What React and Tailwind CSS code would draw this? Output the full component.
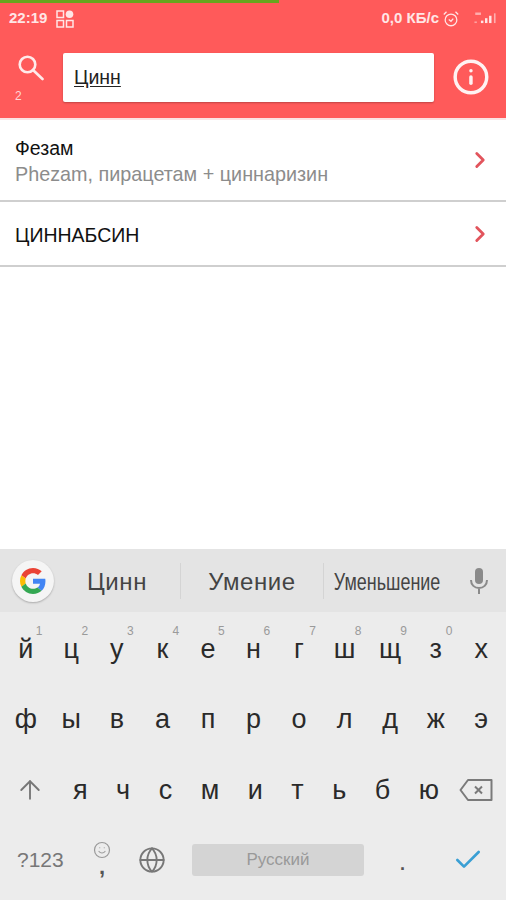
import { Info, ChevronRight, ArrowUp, Globe, Check, Smile } from 'lucide-react';

const topRow = [
  ['й', '1'], ['ц', '2'], ['у', '3'], ['к', '4'], ['е', '5'], ['н', '6'],
  ['г', '7'], ['ш', '8'], ['щ', '9'], ['з', '0'], ['х', ''],
];
const midRow = ['ф', 'ы', 'в', 'а', 'п', 'р', 'о', 'л', 'д', 'ж', 'э'];
const lowRow = ['я', 'ч', 'с', 'м', 'и', 'т', 'ь', 'б', 'ю'];

const GoogleLogo = () => (
  <svg viewBox="0 0 48 48" className="w-[26px] h-[26px]">
    <path fill="#EA4335" d="M24 9.5c3.5 0 6.7 1.2 9.2 3.6l6.9-6.9C35.9 2.4 30.5 0 24 0 14.6 0 6.5 5.4 2.6 13.2l8 6.2C12.5 13.7 17.800 9.500 24 9.500z" />
    <path fill="#4285F4" d="M47 24.500c0-1.600-.1-3.100-.4-4.500H24v9h12.900c-.6 3-2.200 5.500-4.700 7.200l7.700 6C44.400 38 47 31.800 47 24.500z" />
    <path fill="#FBBC05" d="M10.600 28.600c-.5-1.400-.7-3-.7-4.600s.3-3.200.7-4.600l-8-6.200C.9 16.500 0 20.100 0 24s.9 7.500 2.600 10.800l8-6.200z" />
    <path fill="#34A853" d="M24 48c6.500 0 11.900-2.100 15.900-5.800l-7.700-6c-2.200 1.500-5 2.300-8.200 2.300-6.200 0-11.500-4.200-13.400-9.900l-8 6.200C6.500 42.600 14.600 48 24 48z" />
  </svg>
);

const ResultRow = ({ title, subtitle, className }) => (
  <div className={`flex items-center justify-between border-b-2 border-[#cfcfcf] pl-[15px] pr-[13px] ${className}`}>
    <div className={subtitle ? 'pt-[3px]' : 'pt-[4px]'}>
      <div className="text-[19.5px] leading-[25px] text-[#111]">{title}</div>
      {subtitle && <div className="text-[19.8px] leading-[27px] text-[#8c8c8c]">{subtitle}</div>}
    </div>
    <ChevronRight className={`w-[26px] h-[26px] text-[#e2545c] ${subtitle ? '' : 'mt-[1px]'}`} strokeWidth={2.6} />
  </div>
);

export default function App() {
  return (
    <div className="w-[506px] h-[900px] flex flex-col bg-white overflow-hidden font-['Liberation_Sans',sans-serif]">
      {/* Header */}
      <div className="h-[120px] bg-[#ff5a5a] relative shrink-0 border-b-2 border-[#fbe4e4]">
        <div className="absolute top-0 left-0 w-[279px] h-[3px] bg-[#66a61e]" />
        <div className="h-[37px] pl-[9px] pr-[8px] flex items-center justify-between text-[#ffe6e6] text-[15px] font-bold">
          <div className="flex items-center gap-[9px]">
            <span>22:19</span>
            <svg viewBox="0 0 18 18" className="w-[18px] h-[18px]" fill="none" stroke="currentColor" strokeWidth="1.5">
              <rect x="1" y="1" width="6.500" height="6.500" />
              <circle cx="13.500" cy="4.200" r="3.800" fill="currentColor" stroke="none" />
              <rect x="1" y="10.500" width="6.500" height="6.500" />
              <rect x="10.500" y="10.500" width="6.500" height="6.500" />
            </svg>
          </div>
          <div className="flex items-center">
            <span>0,0 КБ/с</span>
            <svg viewBox="0 0 20 20" className="ml-[3px] w-[18px] h-[18px]" fill="none" stroke="currentColor" strokeWidth="1.400">
              <circle cx="10" cy="11" r="6.500" />
              <path d="M7.500 10.500l2.500 2 2.500-3M2 5l3-3M18 5l-3-3" />
            </svg>
            <svg viewBox="0 0 32 18" className="ml-[12px] w-[26px] h-[18px]" fill="currentColor">
              <rect x="3" y="12" width="3" height="2" opacity="0.500" />
              <rect x="11" y="11" width="3" height="3" />
              <rect x="16" y="8" width="3" height="6" />
              <rect x="21" y="5" width="3" height="9" />
              <rect x="27" y="2" width="2" height="12" opacity="0.600" />
              <rect x="4" y="1" width="7" height="3" opacity="0.600" />
            </svg>
          </div>
        </div>
        <div className="flex items-start pl-[17px] pr-[16px] pt-[16px]">
          <div className="w-[46px] shrink-0 relative h-[49px]">
            <svg viewBox="0 0 26 26" className="absolute left-[1px] top-[2px] w-[26px] h-[26px] text-[#ffeaea]" fill="none" stroke="currentColor" strokeWidth="2.6" strokeLinecap="round">
              <circle cx="9.500" cy="9.500" r="7.800" />
              <path d="M15 15l9.500 9" />
            </svg>
            <span className="absolute left-[-2px] top-[36px] text-[12px] leading-[14px] text-[#ffd5d5]">2</span>
          </div>
          <div className="w-[372px] h-[49px] bg-white rounded-[2px] shadow-[0_1px_2px_rgba(0,0,0,0.25)] flex items-center pl-[11px] text-[19.5px] text-[#222] underline underline-offset-2">
            Цинн
          </div>
          <Info className="ml-[18px] w-[38px] h-[38px] mt-[5px] text-[#fff2f2]" strokeWidth={2.2} />
        </div>
      </div>

      {/* Results */}
      <div className="flex-1">
        <ResultRow className="h-[82px]" title="Фезам" subtitle="Phezam, пирацетам + циннаризин" />
        <ResultRow className="h-[65px]" title="ЦИННАБСИН" />
      </div>

      {/* Keyboard */}
      <div className="h-[351px] shrink-0 bg-[#ececec] flex flex-col text-[#2a2a2a]">
        <div className="h-[63px] bg-[#e4e4e4] flex items-center text-[#444]">
          <div className="ml-[12px] w-[42px] h-[42px] rounded-full bg-[#f5f5f5] shadow-[0_1px_2px_rgba(0,0,0,0.25)] flex items-center justify-center shrink-0">
            <GoogleLogo />
          </div>
          <div className="w-[126px] text-center text-[24px] tracking-[0.6px] pt-[3px]">Цинн</div>
          <div className="w-px h-[36px] bg-[#d4d4d4]" />
          <div className="w-[142px] text-center text-[24px] tracking-[0.6px] pt-[3px]">Умение</div>
          <div className="w-px h-[36px] bg-[#d4d4d4]" />
          <div className="w-[126px] -ml-[4px] text-center text-[23px] whitespace-nowrap scale-x-[0.78] pt-[3px]">Уменьшение</div>
          <svg viewBox="0 0 24 28" className="ml-[21px] w-[24px] h-[28px] text-[#8a8a8a]" fill="none" stroke="currentColor" strokeWidth="2">
            <rect x="8" y="1" width="8" height="16" rx="4" fill="currentColor" stroke="none" />
            <path d="M4 13c0 5 3.500 8 8 8s8-3 8-8M12 21v6" />
          </svg>
        </div>

        <div className="grid grid-cols-11 h-[72px] pt-[2px] pl-[3px] pr-[2px]">
          {topRow.map(([ch, num]) => (
            <div key={ch} className="relative flex items-center justify-center text-[27px]">
              {ch}
              {num && <span className="absolute right-[6px] top-[10px] text-[12px] leading-[14px] text-[#9a9a9a]">{num}</span>}
            </div>
          ))}
        </div>

        <div className="grid grid-cols-11 h-[70px] pl-[3px] pr-[2px]">
          {midRow.map((ch) => (
            <div key={ch} className="flex items-center justify-center text-[27px]">{ch}</div>
          ))}
        </div>

        <div className="flex items-center h-[71px] pl-[15px]">
          <ArrowUp className="w-[30px] h-[30px] text-[#777]" strokeWidth={1.5} />
          <div className="flex-1 flex justify-between pl-[28px] pr-[20px] text-[27px] pt-[1px]">
            {lowRow.map((ch) => <span key={ch}>{ch}</span>)}
          </div>
          <svg viewBox="0 0 34 24" className="w-[34px] h-[24px] mr-[13px] text-[#7a7a7a]" fill="none" stroke="currentColor" strokeWidth="2">
            <path d="M1.500 12L9 2h23.500v20H9z" strokeLinejoin="round" />
            <path d="M16 8.500l7 7M23 8.500l-7 7" />
          </svg>
        </div>

        <div className="flex items-center h-[70px] text-[#777]">
          <span className="ml-[17px] w-[52px] text-[21px]">?123</span>
          <div className="ml-[24px] w-[18px] flex flex-col items-center -mt-[4px]">
            <Smile className="w-[18px] h-[18px] text-[#999]" strokeWidth={1.6} />
            <span className="text-[22px] leading-[16px] font-bold text-[#555]">,</span>
          </div>
          <Globe className="ml-[27px] w-[28px] h-[28px]" strokeWidth={1.6} />
          <div className="ml-[26px] w-[172px] h-[32px] rounded-[3px] bg-[#d4d4d4] flex items-center justify-center text-[17px] text-[#999]">
            Русский
          </div>
          <span className="ml-[36px] w-[8px] text-[18px] font-bold leading-none pt-[8px] text-[#555]">.</span>
          <Check className="ml-[44px] w-[32px] h-[32px] text-[#3a9fd4]" strokeWidth={2} />
        </div>
      </div>
    </div>
  );
}
